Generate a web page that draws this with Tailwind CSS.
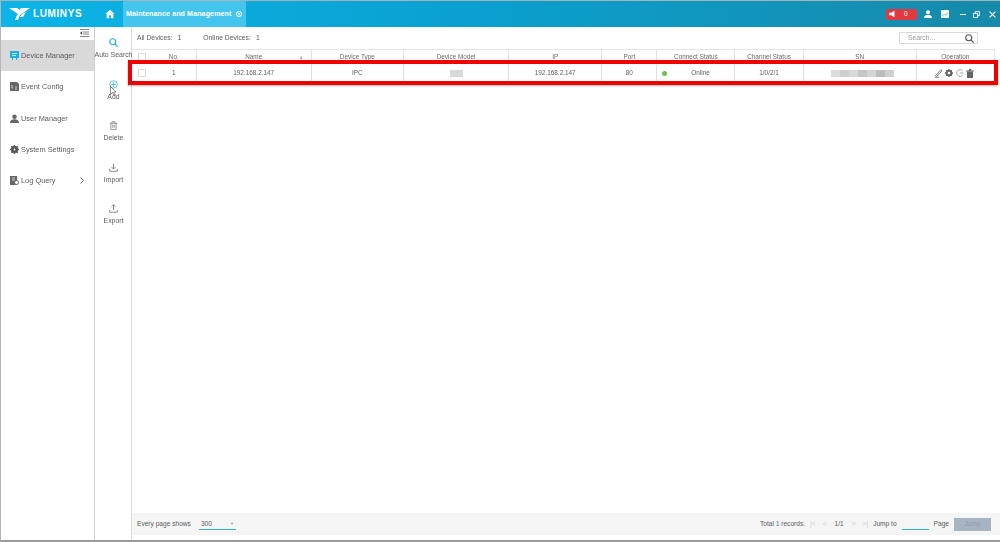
<!DOCTYPE html>
<html lang="en">
<head>
<meta charset="UTF-8">
<title>Maintenance and Management</title>
<script src="https://cdn.jsdelivr.net/npm/@tailwindcss/browser@4"></script>
</head>
<body class="bg-white">
<div class="relative w-[1000px] h-[542px] overflow-hidden flex flex-col font-['Liberation_Sans',Arial,sans-serif] text-[#5c5c5c] blur-[0.5px] border-l border-[#b5b5b5] border-b-2 border-b-[#9a9a9a]">

    <!-- title bar -->
    <header class="h-[27px] shrink-0 flex items-center border-t border-[#9fb4bb] bg-gradient-to-r from-[#0cb4e8] via-[#0a9fce] to-[#168aa9] text-white">
        <div class="w-[95px] pl-2 flex items-center gap-[3px]">
            <svg class="w-[21px] h-[12px]" viewBox="0 0 21 12" fill="#fff"><path d="M0 0h8l4 3-3 3zM13 0h8L11 7 9 12H6l2-5z"/><path d="M9 3l3-3h2l-4 4zM13 6l4-2-3 5h-3z"/></svg>
            <span class="text-[10px] font-bold tracking-[0.6px] leading-none">LUMINYS</span>
        </div>
        <div class="w-[27px] flex justify-center">
            <svg class="w-[10px] h-[10px]" viewBox="0 0 24 24" fill="#fff"><path d="M12 2 1 12h3v10h6v-7h4v7h6V12h3z"/></svg>
        </div>
        <div class="w-[123px] h-full bg-[#43c5ee] flex items-center pl-[3px] gap-[5px]">
            <span class="text-[7.1px] font-bold tracking-[0.1px] whitespace-nowrap">Maintenance and Management</span>
            <svg class="w-[6px] h-[6px]" viewBox="0 0 12 12"><circle cx="6" cy="6" r="5" fill="none" stroke="#fff" stroke-width="2"/><path d="M4 4l4 4M8 4l-4 4" stroke="#fff" stroke-width="1.2"/></svg>
        </div>
        <div class="flex-1"></div>
        <div class="w-[31px] h-[11px] bg-[#e0393f] rounded-[2px] flex items-center text-[6.5px] mr-[7px]">
            <svg class="w-[9px] h-[8px] ml-[2px]" viewBox="0 0 12 12" fill="#fff"><path d="M1 4h3l5-3v10L4 8H1z"/></svg>
            <span class="ml-[7px]">0</span>
        </div>
        <svg class="w-[8px] h-[8px] mr-[9px]" viewBox="0 0 12 12" fill="#fff"><circle cx="6" cy="3.500" r="3"/><path d="M0 12c0-4 3-5 6-5s6 1 6 5z"/></svg>
        <svg class="w-[8px] h-[8px] mr-[11px]" viewBox="0 0 12 12"><rect width="12" height="12" rx="1" fill="#fff"/><path d="M2 9l3-3 2 2 3-4" stroke="#1a95b6" fill="none"/></svg>
        <span class="w-[6px] h-[1px] bg-white mr-[7px]"></span>
        <svg class="w-[7px] h-[7px] mr-[9px]" viewBox="0 0 12 12" fill="none" stroke="#fff" stroke-width="1.5"><rect x="1" y="4" width="7" height="7"/><path d="M4 4V1h7v7H8"/></svg>
        <svg class="w-[7px] h-[7px] mr-[4px]" viewBox="0 0 12 12" stroke="#fff" stroke-width="2"><path d="M1 1l10 10M11 1 1 11"/></svg>
    </header>

    <div class="flex-1 flex min-h-0">
        <!-- main nav -->
        <nav class="w-[94px] shrink-0 border-r border-[#cfcfcf] text-[7.4px]">
            <div class="h-[13px] flex justify-end pr-[5px] pt-[2px]">
                <svg class="w-[9px] h-[8px]" viewBox="0 0 9 8" stroke="#666" stroke-width="0.8"><path d="M0 .5h9M3 3h6M3 5h6M0 7.500h9M2 2.500 .5 4 2 5.500"/></svg>
            </div>
            <div class="h-[31.250px] bg-[#d9d9d9] flex items-center pl-[9px] gap-[2px]">
                <svg class="w-[9px] h-[10px]" viewBox="0 0 9 10" fill="#1cb0dd"><path d="M0 0h9v7H7v2H6V7H3v2H2V7H0z"/><path d="M2 2.500h5M2 4.500h4" stroke="#fff" stroke-width=".7"/></svg>
                <span>Device Manager</span>
            </div>
            <div class="h-[31.250px] flex items-center pl-[9px] gap-[2px]">
                <svg class="w-[9px] h-[9px]" viewBox="0 0 9 9" fill="#666"><path d="M0 0h7l2 2v7H0z"/><path d="M2 3v3h1M5 5h2M5 7h2" stroke="#fff" stroke-width=".7" fill="none"/></svg>
                <span>Event Config</span>
            </div>
            <div class="h-[31.250px] flex items-center pl-[9px] gap-[2px]">
                <svg class="w-[9px] h-[9px]" viewBox="0 0 12 12" fill="#666"><circle cx="6" cy="3.500" r="3"/><path d="M0 12c0-4 3-5 6-5s6 1 6 5z"/></svg>
                <span>User Manager</span>
            </div>
            <div class="h-[31.250px] flex items-center pl-[9px] gap-[2px]">
                <svg class="w-[9px] h-[9px]" viewBox="0 0 24 24" fill="none" stroke="#555" stroke-width="7"><circle cx="12" cy="12" r="6"/><path d="M12 0v5M12 19v5M0 12h5M19 12h5M3.500 3.500l3.500 3.500M17 17l3.500 3.500M20.500 3.500 17 7M7 17l-3.500 3.500" stroke-width="4"/></svg>
                <span>System Settings</span>
            </div>
            <div class="h-[31.250px] flex items-center pl-[9px] gap-[2px]">
                <svg class="w-[9px] h-[9px]" viewBox="0 0 9 9" fill="#666"><path d="M0 0h7v9H0z"/><path d="M2 2h3M2 4h3" stroke="#fff" stroke-width=".7"/><circle cx="6.500" cy="6.500" r="2" fill="#fff" stroke="#666"/></svg>
                <span>Log Query</span>
                <svg class="w-[4px] h-[7px] ml-[22px]" viewBox="0 0 4 7" fill="none" stroke="#666"><path d="M.5.500l3 3-3 3"/></svg>
            </div>
        </nav>

        <!-- action column -->
        <aside class="w-[37px] shrink-0 border-r border-[#ddd] pt-[11px] pl-[1px] flex flex-col items-center text-[6.9px] whitespace-nowrap">
            <div class="h-[41.500px] flex flex-col items-center gap-[3px]">
                <svg class="w-[9px] h-[9px]" viewBox="0 0 12 12" fill="none" stroke="#2cb4dc" stroke-width="1.600"><circle cx="5" cy="5" r="4"/><path d="M8 8l3.500 3.500"/></svg>
                <span>Auto Search</span>
            </div>
            <div class="h-[41.500px] flex flex-col items-center gap-[3px]">
                <svg class="w-[9px] h-[9px]" viewBox="0 0 12 12" fill="none" stroke="#2cb4dc"><circle cx="6" cy="6" r="5"/><path d="M6 3v6M3 6h6"/></svg>
                <span>Add</span>
            </div>
            <div class="h-[41.500px] flex flex-col items-center gap-[3px]">
                <svg class="w-[9px] h-[9px]" viewBox="0 0 12 12" fill="none" stroke="#777"><path d="M1 3h10M4 3V1h4v2M2.500 3v8.500h7V3M5 5v4M7 5v4"/></svg>
                <span>Delete</span>
            </div>
            <div class="h-[41.500px] flex flex-col items-center gap-[3px]">
                <svg class="w-[9px] h-[9px]" viewBox="0 0 12 12" fill="none" stroke="#666"><path d="M6 1v7M3.500 5.500 6 8l2.500-2.500M1 8v3h10V8"/></svg>
                <span>Import</span>
            </div>
            <div class="h-[41.500px] flex flex-col items-center gap-[3px]">
                <svg class="w-[9px] h-[9px]" viewBox="0 0 12 12" fill="none" stroke="#666"><path d="M6 8V1M3.500 3.500 6 1l2.500 2.500M1 8v3h10V8"/></svg>
                <span>Export</span>
            </div>
        </aside>

        <!-- content -->
        <main class="flex-1 min-w-0 flex flex-col text-[6.4px]">
            <div class="h-[22px] shrink-0 flex items-center pl-[5px] pr-[22px] text-[6.8px]">
                <span>All Devices:</span><span class="ml-[5px]">1</span>
                <span class="ml-[22px]">Online Devices:</span><span class="ml-[5px]">1</span>
                <div class="ml-auto w-[79px] h-[12px] border border-[#d8d8d8] rounded-[1px] flex items-center justify-between pl-[8px] pr-[3px] text-[#999]">
                    <span>Search...</span>
                    <svg class="w-[9px] h-[9px]" viewBox="0 0 12 12" fill="none" stroke="#555" stroke-width="1.500"><circle cx="5" cy="5" r="4"/><path d="M8 8l3.500 3.500"/></svg>
                </div>
            </div>

            <table class="w-[863px] table-fixed border-collapse text-center">
                <colgroup>
                    <col class="w-[20px]"><col class="w-[44px]"><col class="w-[115px]"><col class="w-[92px]"><col class="w-[105px]"><col class="w-[93px]"><col class="w-[55px]"><col class="w-[78px]"><col class="w-[68px]"><col class="w-[113px]"><col class="w-[78px]">
                </colgroup>
                <thead class="text-[#6a6a6a]">
                    <tr class="h-[15px] border-t border-[#e4e4e4]">
                        <th class="font-normal"><span class="block w-[8px] h-[8px] border border-[#ddd] mx-auto"></span></th>
                        <th class="font-normal border-r border-[#e0e0e0]">No.</th>
                        <th class="font-normal border-r border-[#e0e0e0] relative">Name<span class="absolute right-[7px] top-[4px] text-[5px] text-[#aaa]">▲</span></th>
                        <th class="font-normal border-r border-[#e0e0e0]">Device Type</th>
                        <th class="font-normal border-r border-[#e0e0e0]">Device Model</th>
                        <th class="font-normal border-r border-[#e0e0e0]">IP</th>
                        <th class="font-normal border-r border-[#e0e0e0]">Port</th>
                        <th class="font-normal border-r border-[#e0e0e0]">Connect Status</th>
                        <th class="font-normal border-r border-[#e0e0e0]">Channel Status</th>
                        <th class="font-normal border-r border-[#e0e0e0]">SN</th>
                        <th class="font-normal border-r border-[#e0e0e0]">Operation</th>
                    </tr>
                </thead>
                <tbody>
                    <tr class="h-[18px] border-b border-[#e0e0e0]">
                        <td><span class="block w-[8px] h-[8px] border border-[#ddd] mx-auto"></span></td>
                        <td class="border-r border-[#e0e0e0]">1</td>
                        <td class="border-r border-[#e0e0e0]">192.168.2.147</td>
                        <td class="border-r border-[#e0e0e0]">IPC</td>
                        <td class="border-r border-[#e0e0e0]"><span class="block w-[13px] h-[7px] bg-[#d8d8d8] mx-auto"></span></td>
                        <td class="border-r border-[#e0e0e0]">192.168.2.147</td>
                        <td class="border-r border-[#e0e0e0]">80</td>
                        <td class="border-r border-[#e0e0e0]">
                            <div class="flex items-center pl-[5px]">
                                <span class="w-[5px] h-[5px] rounded-full bg-[#6cc04a]"></span>
                                <span class="ml-[24px]">Online</span>
                            </div>
                        </td>
                        <td class="border-r border-[#e0e0e0]">1/0/2/1</td>
                        <td class="border-r border-[#e0e0e0]">
                            <div class="flex w-[63px] h-[7px] ml-[27px]">
                                <span class="flex-1 bg-[#dcdcdc]"></span><span class="flex-1 bg-[#cfcfcf]"></span><span class="flex-1 bg-[#d8d8d8]"></span><span class="flex-1 bg-[#c6c6c6]"></span><span class="flex-1 bg-[#d4d4d4]"></span><span class="flex-1 bg-[#bdbdbd]"></span><span class="flex-1 bg-[#d0d0d0]"></span>
                            </div>
                        </td>
                        <td class="border-r border-[#e0e0e0]">
                            <div class="flex items-center justify-center gap-[2.500px] pr-[3px]">
                                <svg class="w-[9px] h-[9px]" viewBox="0 0 12 12" fill="none" stroke="#777" stroke-width="1.300"><path d="M1 11h6M2 9l7-8 1.500 1.500-7 7.500z"/></svg>
                                <svg class="w-[8px] h-[8px]" viewBox="0 0 24 24" fill="none" stroke="#666" stroke-width="6"><circle cx="12" cy="12" r="7"/><path d="M12 0v4M12 20v4M0 12h4M20 12h4M3.500 3.500l3 3M17.500 17.500l3 3M20.500 3.500l-3 3M6.500 17.500l-3 3" stroke-width="4"/></svg>
                                <svg class="w-[8px] h-[8px]" viewBox="0 0 12 12" fill="none" stroke="#777"><path d="M10 3A5 5 0 1 0 10 9M5.500 6H11"/></svg>
                                <svg class="w-[8px] h-[9px]" viewBox="0 0 10 12" fill="#666"><path d="M0 2h10v1.500H0zM3.500 0h3v2h-3zM1 4h8v8H1z"/></svg>
                            </div>
                        </td>
                    </tr>
                </tbody>
            </table>

            <div class="flex-1"></div>

            <!-- pager -->
            <footer class="h-[22px] mb-[5px] shrink-0 bg-[#f5f5f5] flex items-center pl-[5px] text-[6.6px]">
                <span>Every page shows</span>
                <div class="ml-[8px] w-[37px] h-[12px] border-b border-[#2cb4dc] flex items-center justify-between pl-[2px] pr-[2px]">
                    <span>300</span><span class="text-[4px] text-[#999]">▼</span>
                </div>
                <div class="ml-auto flex items-center pr-[9px]">
                    <span>Total <span class="text-[#2b7bc0]">1</span> records.</span>
                    <span class="ml-[5px] text-[#ccc]">|&lt;</span>
                    <span class="ml-[7px] text-[#ccc]">&lt;</span>
                    <span class="ml-[8px]">1/1</span>
                    <span class="ml-[8px] text-[#ccc]">&gt;</span>
                    <span class="ml-[7px] text-[#ccc]">&gt;|</span>
                    <span class="ml-[5px]">Jump to</span>
                    <span class="ml-[5px] w-[27px] h-[8px] mt-[4px] border-b border-[#2cb4dc]"></span>
                    <span class="ml-[5px]">Page</span>
                    <button class="ml-[5px] w-[37px] h-[13px] bg-[#a9b4c2] text-[#8d98a6] text-[6.6px]">Jump</button>
                </div>
            </footer>
        </main>
    </div>

    <!-- annotation and pointer over the screenshot -->
    <div class="absolute left-[127px] top-[60px] w-[870px] h-[25px] border-[4px] border-[#ee0000] shadow-[0_1px_2px_rgba(0,0,0,0.3)]"></div>
    <svg class="absolute left-[109px] top-[86px] w-[6px] h-[10px]" viewBox="0 0 6 10"><path d="M.5.500v8l2-2 1.500 3 1-.5-1.500-3h2.500z" fill="#fff" stroke="#444" stroke-width=".6"/></svg>
</div>
</body>
</html>
